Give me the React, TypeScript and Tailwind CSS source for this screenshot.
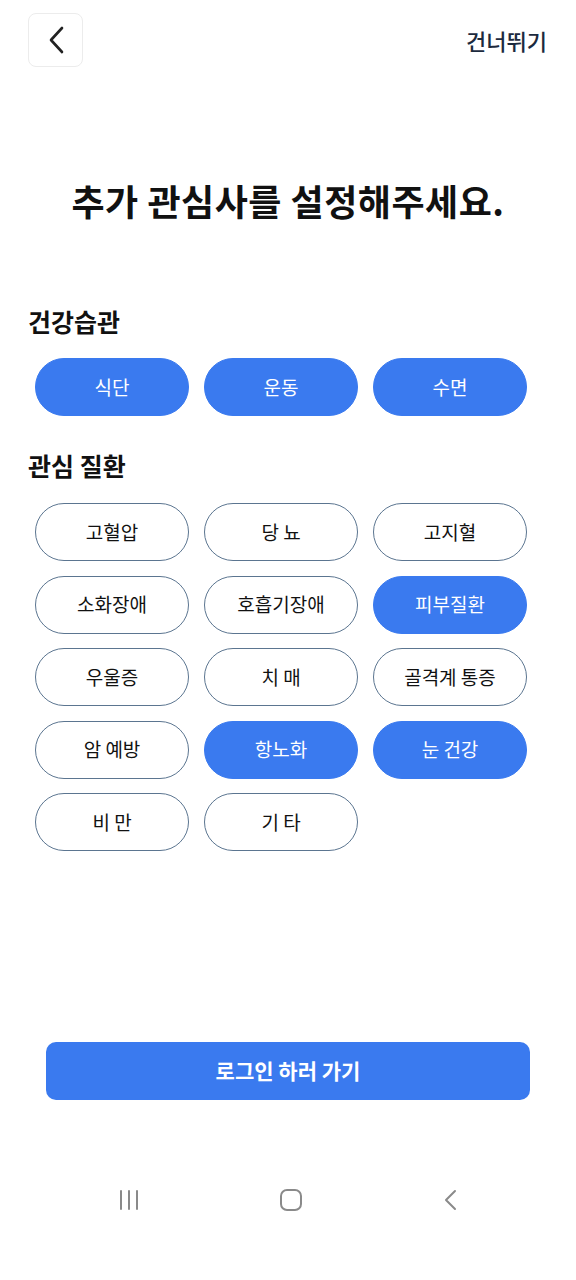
import React from "react";

const font = { fontFamily: '"Noto Sans CJK KR", "Noto Sans", sans-serif' };

type Chip = { label: string; on?: boolean };

const habits: Chip[] = [
  { label: "식단", on: true },
  { label: "운동", on: true },
  { label: "수면", on: true },
];

const diseases: Chip[] = [
  { label: "고혈압" },
  { label: "당 뇨" },
  { label: "고지혈" },
  { label: "소화장애" },
  { label: "호흡기장애" },
  { label: "피부질환", on: true },
  { label: "우울증" },
  { label: "치 매" },
  { label: "골격계 통증" },
  { label: "암 예방" },
  { label: "항노화", on: true },
  { label: "눈 건강", on: true },
  { label: "비 만" },
  { label: "기 타" },
];

function ChipBtn({ c }: { c: Chip }) {
  return (
    <div
      className={
        c.on
          ? "h-[58px] rounded-full bg-[#3a7aef] border-[1.5px] border-[#3a7aef] text-white flex items-center justify-center text-[19px]"
          : "h-[58px] rounded-full bg-white border-[1.5px] border-[#5b7590] text-[#111111] flex items-center justify-center text-[19px]"
      }
    >
      {c.label}
    </div>
  );
}

export default function App() {
  return (
    <div className="w-[576px] h-[1280px] bg-white flex flex-col" style={font}>
      <div className="flex items-center justify-between pt-[13px] pl-[28px] pr-[29px]">
        <div className="w-[55px] h-[54px] rounded-[8px] border border-[#ececec] flex items-center justify-center">
          <svg width="16" height="28" viewBox="0 0 16 28" fill="none">
            <path d="M14 2 L3 14 L14 26" stroke="#222" strokeWidth="2.6" strokeLinecap="round" strokeLinejoin="round" />
          </svg>
        </div>
        <div className="text-[22px] text-[#1c2a3e] font-medium leading-[28px]">건너뛰기</div>
      </div>

      <div className="mt-[111px] h-[44px] leading-[44px] text-center text-[36px] font-bold text-[#111] tracking-[0.5px]">
        추가 관심사를 설정해주세요.
      </div>

      <div className="mt-[84px] ml-[28px] h-[30px] leading-[30px] text-[25px] font-bold text-[#111]">건강습관</div>
      <div className="mt-[22px] ml-[35px] w-[492px] grid grid-cols-3 gap-x-[15px]">
        {habits.map((c) => (
          <ChipBtn key={c.label} c={c} />
        ))}
      </div>

      <div className="mt-[34px] ml-[28px] h-[30px] leading-[30px] text-[25px] font-bold text-[#111]">관심 질환</div>
      <div className="mt-[23px] ml-[35px] w-[492px] grid grid-cols-3 gap-x-[15px] gap-y-[14.5px]">
        {diseases.map((c) => (
          <ChipBtn key={c.label} c={c} />
        ))}
      </div>

      <div className="flex-1" />

      <div className="mx-[46px] h-[58px] rounded-[10px] bg-[#3a7aef] flex items-center justify-center text-white text-[21px] font-bold">
        로그인 하러 가기
      </div>

      <div className="h-[180px] pt-[89px]">
        <div className="flex items-center justify-between h-[22px] pl-[119px] pr-[119px]">
          <svg width="20" height="22" viewBox="0 0 20 22">
            <path d="M2 2 V20 M10 2 V20 M18 2 V20" stroke="#8a8a8a" strokeWidth="2" strokeLinecap="round" />
          </svg>
          <svg width="24" height="24" viewBox="0 0 24 24">
            <rect x="2" y="2" width="20" height="20" rx="6" fill="none" stroke="#8a8a8a" strokeWidth="2" />
          </svg>
          <svg width="14" height="22" viewBox="0 0 14 22">
            <path d="M12 2 L3 11 L12 20" fill="none" stroke="#8a8a8a" strokeWidth="2" strokeLinecap="round" strokeLinejoin="round" />
          </svg>
        </div>
      </div>
    </div>
  );
}
